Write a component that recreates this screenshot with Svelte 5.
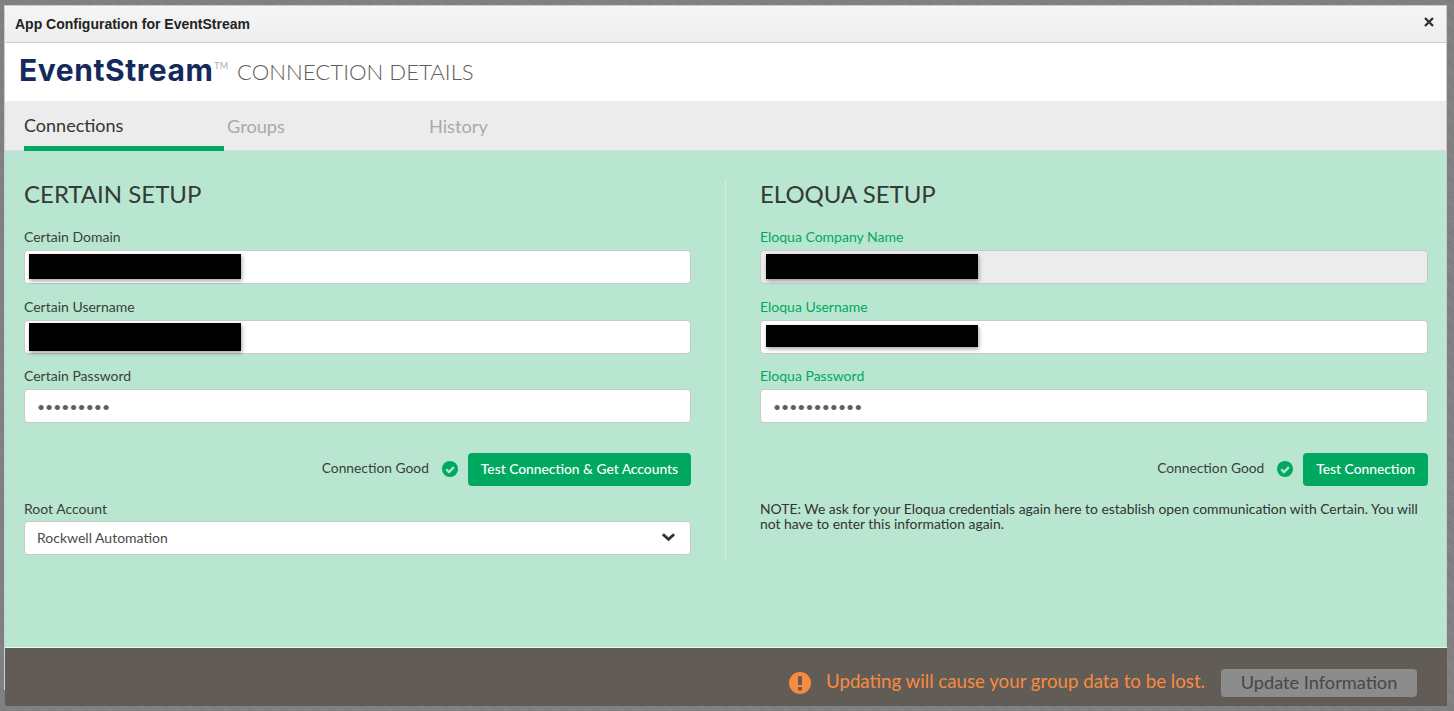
<script>
  const certain = [
    { label: 'Certain Domain', type: 'text' },
    { label: 'Certain Username', type: 'text', tall: true },
    { label: 'Certain Password', type: 'password', value: 'aaaaaaaaa' }
  ];
  const eloqua = [
    { label: 'Eloqua Company Name', type: 'text', disabled: true },
    { label: 'Eloqua Username', type: 'text', short: true },
    { label: 'Eloqua Password', type: 'password', value: 'aaaaaaaaaaa' }
  ];
</script>

{#snippet fields(list)}
  {#each list as field}
    <div class="field">
      <label for={field.label}>{field.label}</label>
      {#if field.type === 'password'}
        <input id={field.label} class="input" type="password" value={field.value} />
      {:else}
        <div id={field.label} class="input" class:disabled={field.disabled} class:tall={field.tall} class:short={field.short}>
          <span class="redacted"></span>
        </div>
      {/if}
    </div>
  {/each}
{/snippet}

{#snippet status()}
  <span class="status">Connection Good</span>
  <svg class="check" viewBox="0 0 16 16" width="16" height="16">
    <circle cx="8" cy="8" r="8" fill="#00a960" />
    <path d="M4.2 8.2 7 11l4.9-4.9" fill="none" stroke="#b9e6d0" stroke-width="2.3" />
  </svg>
{/snippet}

<div class="page">
  <div class="modal">
    <header class="titlebar">
      <span>App Configuration for EventStream</span>
      <svg class="close" viewBox="0 0 10 10" width="10" height="10">
        <path d="M1 1l8 8M9 1L1 9" stroke="#333" stroke-width="2.4" fill="none" />
      </svg>
    </header>

    <div class="brand">
      <span class="logo">EventStream</span><span class="tm">TM</span>
      <span class="subtitle">CONNECTION DETAILS</span>
    </div>

    <nav class="tabs">
      <span class="tab active">Connections</span>
      <span class="tab groups">Groups</span>
      <span class="tab">History</span>
    </nav>

    <main class="content">
      <section class="col left">
        <h2>CERTAIN SETUP</h2>
        {@render fields(certain)}
        <div class="actions">
          {@render status()}
          <button>Test Connection &amp; Get Accounts</button>
        </div>
        <div class="field">
          <label for="root">Root Account</label>
          <div id="root" class="input select">
            <span>Rockwell Automation</span>
            <svg viewBox="0 0 16 10" width="15" height="10">
              <path d="M2 2l6 5.5L14 2" fill="none" stroke="#333" stroke-width="3" />
            </svg>
          </div>
        </div>
      </section>

      <section class="col right eloqua">
        <h2>ELOQUA SETUP</h2>
        {@render fields(eloqua)}
        <div class="actions">
          {@render status()}
          <button>Test Connection</button>
        </div>
        <p class="note">NOTE: We ask for your Eloqua credentials again here to establish open communication with Certain. You will not have to enter this information again.</p>
      </section>
    </main>

    <footer class="footer">
      <svg class="warn-icon" viewBox="0 0 22 22" width="22" height="22">
        <circle cx="11" cy="11" r="11" fill="#f98b3f" />
        <rect x="9" y="4" width="4" height="9" rx="0.5" fill="#625c57" />
        <rect x="9" y="15" width="4" height="3.6" rx="0.5" fill="#625c57" />
      </svg>
      <span class="warning">Updating will cause your group data to be lost.</span>
      <button class="update" disabled>Update Information</button>
    </footer>
  </div>
</div>

<style>
  :global(body) {
    margin: 0;
    background: #7f7f7f;
    font-family: Lato, "Open Sans", sans-serif;
  }

  .page {
    height: 711px;
    box-sizing: border-box;
    padding: 5px 7px 5px 4px;
    overflow: hidden;
    background: repeating-linear-gradient(45deg, #7c7c7c 0 1px, #858585 1px 2px);
  }

  /* the footer hangs below the modal's side borders */
  .modal {
    display: flex;
    flex-direction: column;
    height: 685px;
    box-sizing: border-box;
    border-top: 1px solid #c3cfdb;
    border-left: 1px solid #c3cfdb;
    border-right: 1px solid #c3cfdb;
  }

  .titlebar {
    height: 37px;
    display: flex;
    align-items: center;
    justify-content: space-between;
    padding: 0 12px 0 10px;
    box-sizing: border-box;
    background: linear-gradient(#f5f5f5, #eeeeee);
    border-bottom: 1px solid #c3cfdb;
    font: bold 14px "Liberation Sans", Arial, sans-serif;
    color: #222;
    flex: none;
  }

  .close {
    margin-top: -5px;
  }

  .brand {
    height: 58px;
    flex: none;
    display: flex;
    align-items: flex-start;
    padding-left: 14px;
    background: #fff;
  }

  .logo {
    font-family: Inter, Lato, sans-serif;
    font-size: 30px;
    font-weight: 700;
    line-height: 38px;
    margin-top: 8px;
    color: #152a5c;
    letter-spacing: 0.55px;
  }

  .tm {
    font-size: 9px;
    line-height: 12px;
    margin: 17px 0 0 1px;
    color: #aaa;
  }

  .subtitle {
    font-size: 22.2px;
    font-weight: 300;
    line-height: 28px;
    margin: 15px 0 0 9px;
    color: #625c57;
  }

  .tabs {
    height: 50px;
    flex: none;
    display: flex;
    padding-left: 19px;
    background: #ececec;
    border-bottom: 1px solid #dcdcdc;
    box-sizing: border-box;
    font-size: 18.2px;
    color: #a9a9a9;
  }

  .tab {
    width: 200px;
    padding-top: 14px;
    box-sizing: border-box;
  }

  .tab.groups {
    padding-left: 3px;
    width: 205px;
  }

  .tab.active {
    color: #333;
    border-bottom: 5px solid #00a960;
    padding-top: 13px;
    height: 50px;
    font-size: 18px;
  }

  .content {
    flex: none;
    height: 496px;
    display: flex;
    box-sizing: border-box;
    padding: 29px 18px 0 19px;
    background: #b9e6d0;
    color: #333;
  }

  .col {
    height: 379px;
    box-sizing: border-box;
  }

  .left {
    width: 702px;
    padding-right: 34px;
    border-right: 1px solid #d4eee1;
  }

  .right {
    padding-left: 34px;
    width: 702px;
  }

  h2 {
    margin: -1px 0 18px;
    font-size: 24px;
    font-weight: 400;
    line-height: 30px;
    color: #333b36;
  }

  .field {
    margin-bottom: 12.6px;
  }

  label {
    display: block;
    font-size: 14px;
    line-height: 19px;
    margin-bottom: 4px;
    color: #3a3f3c;
  }

  .eloqua label {
    color: #00a960;
  }

  .input {
    display: block;
    width: 100%;
    height: 34px;
    box-sizing: border-box;
    padding: 3px 4px;
    background: #fff;
    border: 1px solid #c9c9c9;
    border-radius: 4px;
    font-family: Lato, sans-serif;
    color: #5f5f5f;
  }

  input.input {
    font-size: 14px;
    padding: 0 12px;
    letter-spacing: 0;
  }

  .eloqua div.input {
    padding-left: 5px;
  }

  .input.disabled {
    background: #ececec;
  }

  .redacted {
    display: block;
    width: 212px;
    height: 25px;
    background: #000;
    box-shadow: 1px 2px 4px rgba(0, 0, 0, 0.35);
  }

  .input.tall {
    padding-top: 2px;
  }

  .tall .redacted {
    height: 28px;
  }

  .input.short {
    padding-top: 4px;
  }

  .short .redacted {
    height: 22px;
  }

  .actions {
    display: flex;
    align-items: center;
    justify-content: flex-end;
    margin: 30px 0 13px;
    height: 33px;
  }

  .status {
    font-size: 13.8px;
    color: #3a3f3c;
    margin-right: 13px;
    margin-top: -4px;
  }

  .check {
    margin-right: 10px;
    margin-top: -2px;
  }

  button {
    height: 33px;
    padding: 0 13px 2px;
    border: none;
    border-radius: 4px;
    background: #00a960;
    color: #fff;
    font: 500 13.8px Lato, sans-serif;
  }

  .input.select {
    display: flex;
    align-items: center;
    justify-content: space-between;
    margin-top: -1px;
    padding: 0 14px 2px 12px;
    font-size: 14px;
    color: #4a4a4a;
  }

  .note {
    margin: 15px 0 0;
    font-size: 13.9px;
    line-height: 15px;
    color: #333;
  }

  .footer {
    flex: none;
    height: 59px;
    margin-right: -1px;
    display: flex;
    align-items: center;
    justify-content: flex-end;
    padding: 12px 30px 0 0;
    background: #625c57;
    border-top: 1px solid #f2f2f2;
    box-sizing: border-box;
  }

  .warn-icon {
    margin-bottom: 1px;
  }

  .warning {
    margin: 0 16px 4px 15px;
    font-size: 18.7px;
    color: #f98b3f;
  }

  .update {
    width: 196px;
    height: 28px;
    padding: 0 0 2px;
    background: #8c8c8c;
    color: #474747;
    font-size: 18.2px;
    font-weight: 400;
  }
</style>
